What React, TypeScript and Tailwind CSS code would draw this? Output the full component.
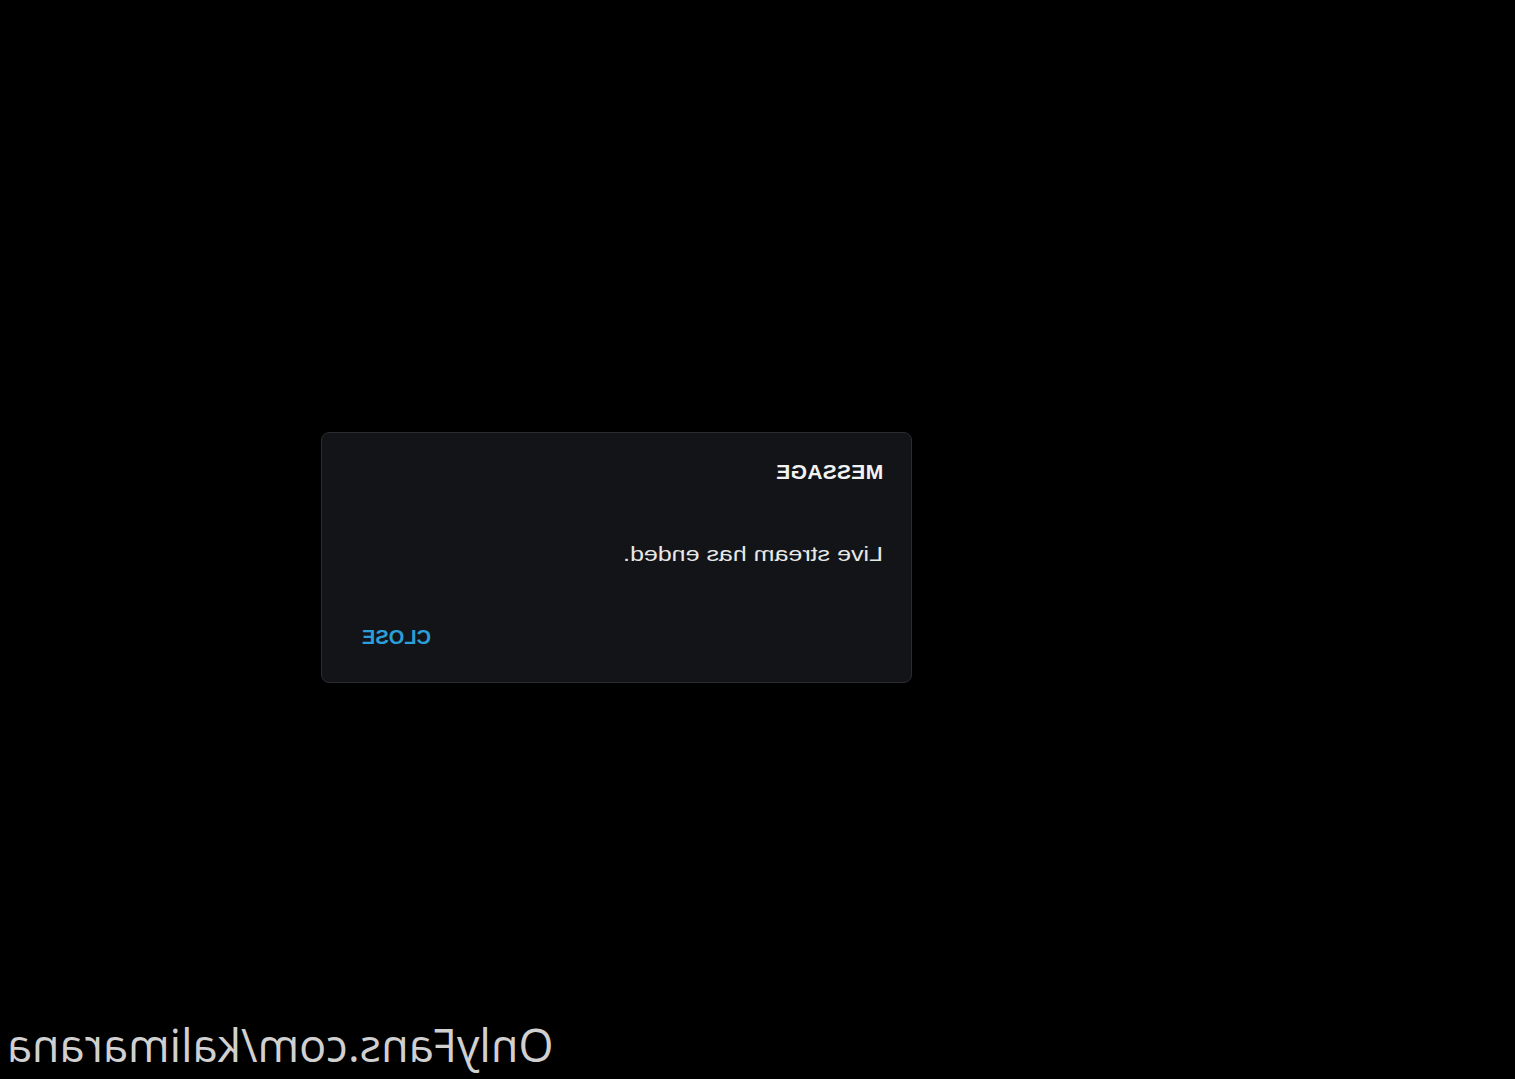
export default function App() {
  return (
    <div className="h-[1079px] w-full bg-black flex flex-col overflow-hidden" style={{ fontFamily: '"Liberation Sans", Arial, sans-serif' }}>
      <div className="pt-[432px] pl-[321px]">
        <div className="w-[591px] h-[251px] rounded-lg border border-[#2b2c30] bg-[#131417] flex flex-col items-end pr-[28px] pt-[27px]">
          <span className="inline-block -scale-x-100 text-[21px] leading-[24px] font-bold text-[#f2f2f2] tracking-[0.3px]">MESSAGE</span>
          <span className="inline-block scale-x-125 origin-right mt-[58px]">
            <span className="inline-block -scale-x-100 text-[20px] leading-[24px] text-[#e8e8e8]">Live stream has ended.</span>
          </span>
          <div className="self-start pl-[40px] mt-[58px]">
            <span className="inline-block -scale-x-100 text-[20px] leading-[22px] font-bold text-[#2b9fd9]">CLOSE</span>
          </div>
        </div>
      </div>
      <div className="mt-auto pl-[7px] pb-[6px]">
        <span className="inline-block -scale-x-100 text-[45px] leading-[56px] text-[#d0d0d0]" style={{ fontFamily: '"Open Sans", sans-serif' }}>OnlyFans.com/kalimarana</span>
      </div>
    </div>
  );
}
